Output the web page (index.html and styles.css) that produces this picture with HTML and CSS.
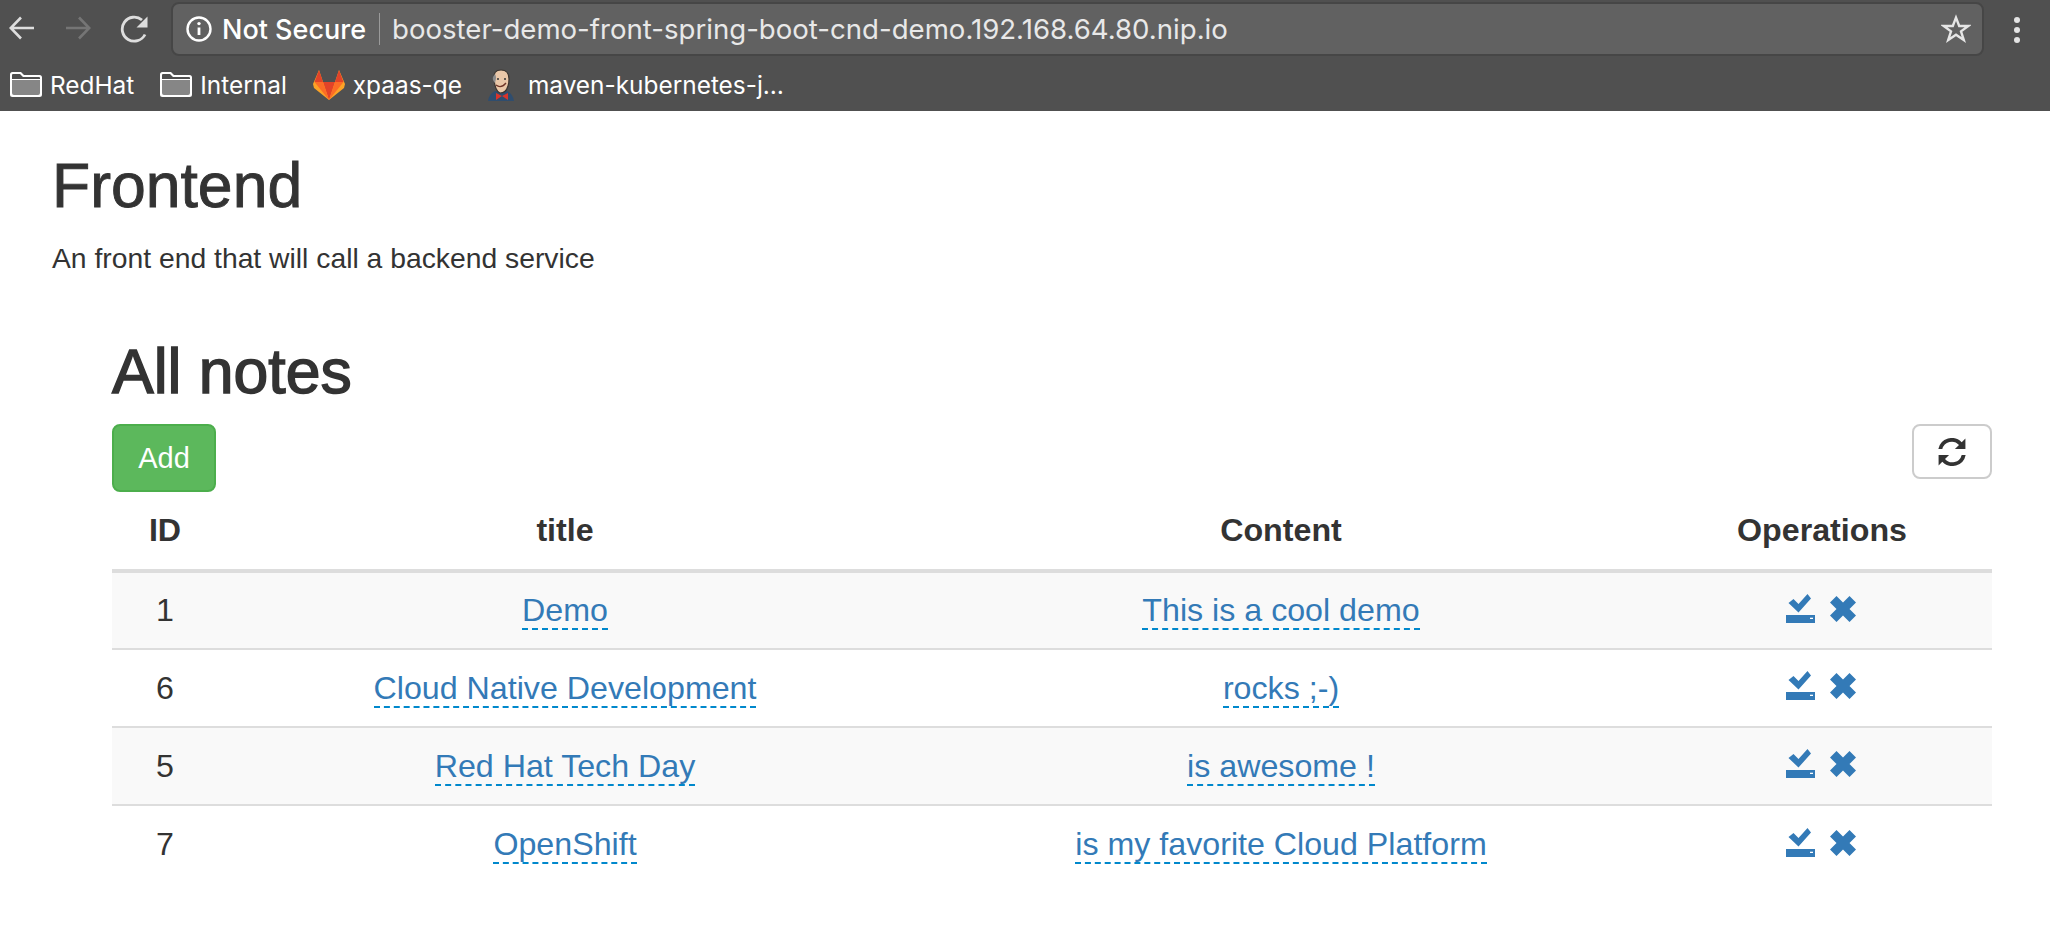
FILE: index.html
```html
<!DOCTYPE html>
<html lang="en">
<head>
  <meta charset="UTF-8" />
  <title>Frontend</title>
  <link rel="stylesheet" href="styles.css">
</head>
<body>
  <header class="browser-bar">
    <div class="toolbar">
      <svg class="nav-icon" width="26" height="26" viewBox="0 0 26 26" fill="none" stroke="#dedede" stroke-width="2.6"><path d="M25 13H2M12 2.500 1.800 13 12 23.500"/></svg>
      <svg class="nav-icon nav-forward" width="26" height="26" viewBox="0 0 26 26" fill="none" stroke="#757575" stroke-width="2.6"><path d="M1 13h23M14 2.500 24.200 13 14 23.500"/></svg>
      <svg class="nav-icon nav-reload" width="28" height="28" viewBox="0 0 28 28" fill="none"><path d="M25 19.500A12 12 0 1 1 22 5" stroke="#dedede" stroke-width="2.8"/><path d="M27.500 1.500V12.500H16.500Z" fill="#dedede"/></svg>
      <div class="address">
        <svg width="26" height="26" viewBox="0 0 26 26" fill="none"><circle cx="13" cy="13" r="11.500" stroke="#fff" stroke-width="2.4"/><path d="M13 11.500v7.500" stroke="#fff" stroke-width="2.8"/><circle cx="13" cy="7.600" r="1.700" fill="#fff"/></svg>
        <span class="secure">Not Secure</span>
        <span class="address-sep"></span>
        <span class="url">booster-demo-front-spring-boot-cnd-demo.192.168.64.80.nip.io</span>
        <svg class="star" width="30" height="30" viewBox="0 0 30 30" fill="none"><path d="M15 3.600 18.200 12H27.200L20 17.400 22.800 26 15 20.800 7.200 26 10 17.400 2.800 12H11.800Z" stroke="#e6e6e6" stroke-width="2.4"/></svg>
      </div>
      <div class="menu-dots"><i></i><i></i><i></i></div>
    </div>
    <nav class="bookmarks">
      <a class="bookmark">
        <svg width="32" height="26" viewBox="0 0 32 26"><path d="M0 2.500Q0 0 2.500 0H11L14 3H29.500Q32 3 32 5.500V22.500Q32 25 29.500 25H2.500Q0 25 0 22.500Z" fill="#fff"/><path d="M2 8H30V21Q30 23 28 23H4Q2 23 2 21Z" fill="#868686"/><path d="M2 3Q2 2 3 2H10L13 5H29Q30 5 30 6V7H2Z" fill="#4f4f4f"/></svg>
        RedHat
      </a>
      <a class="bookmark">
        <svg width="32" height="26" viewBox="0 0 32 26"><path d="M0 2.500Q0 0 2.500 0H11L14 3H29.500Q32 3 32 5.500V22.500Q32 25 29.500 25H2.500Q0 25 0 22.500Z" fill="#fff"/><path d="M2 8H30V21Q30 23 28 23H4Q2 23 2 21Z" fill="#868686"/><path d="M2 3Q2 2 3 2H10L13 5H29Q30 5 30 6V7H2Z" fill="#4f4f4f"/></svg>
        Internal
      </a>
      <a class="bookmark">
        <svg width="32" height="30" viewBox="0 0 32 30"><path d="M16 30 1 18 0 14 6 0 10 12H22L26 0 32 14 31 18Z" fill="#fca326"/><path d="M16 30 10 12H22Z" fill="#e24329"/><path d="M16 30 10 12H1.500Z" fill="#fc6d26"/><path d="M16 30 22 12H30.500Z" fill="#fc6d26"/><path d="M6 0 10 12H1.500Z" fill="#e24329"/><path d="M26 0 22 12H30.500Z" fill="#e24329"/></svg>
        xpaas-qe
      </a>
      <a class="bookmark bookmark-avatar">
        <svg width="26" height="32" viewBox="0 0 26 32"><path d="M0 32Q1 25 7 22L19 22Q25 25 26 32Z" fill="#2f4d6e"/><path d="M6 10Q5 1 13 1 21 1 21 10 21 14 20 17 18 24 12 24 7 22 6 10Z" fill="#eac7a8" stroke="#3c3530" stroke-width="1.200"/><path d="M6 13Q3 9 7 5 9 8 7 14Z" fill="#8d8d8d"/><path d="M8 16Q13 20 18 14" stroke="#6e3427" stroke-width="1.200" fill="none"/><circle cx="10" cy="10" r="1" fill="#333"/><circle cx="17" cy="10" r="1" fill="#333"/><path d="M8 24 14 27 20 24V31L14 27 8 31Z" fill="#d9342b"/></svg>
        maven-kubernetes-j…
      </a>
    </nav>
  </header>

  <main class="page">
    <h1 class="page-title">Frontend</h1>
    <p class="page-lead">An front end that will call a backend service</p>

    <section class="notes">
      <h2 class="notes-title">All notes</h2>
      <div class="notes-actions">
        <button class="btn-add">Add</button>
        <button class="btn-refresh">
          <svg width="28" height="28" viewBox="3 3 24 24"><path d="M26.500 3.500V12.500H17.500L21 9A8.300 8.300 0 0 0 6.700 12.500H3.300A11.700 11.700 0 0 1 23.300 6.700Z" fill="#333"/><path d="M3.500 26.500V17.500H12.500L9 21A8.300 8.300 0 0 0 23.300 17.500H26.700A11.700 11.700 0 0 1 6.700 23.300Z" fill="#333"/></svg>
        </button>
      </div>
      <table class="notes-table">
        <colgroup>
          <col class="col-id"><col class="col-title"><col class="col-content"><col class="col-ops">
        </colgroup>
        <thead>
          <tr><th>ID</th><th>title</th><th>Content</th><th class="ops-head">Operations</th></tr>
        </thead>
        <tbody>
          <tr>
            <td>1</td><td><a class="editable">Demo</a></td><td><a class="editable">This is a cool demo</a></td>
            <td class="ops">
              <svg width="30" height="30" viewBox="0 0 30 30"><path d="M2.500 9 7.500 5 12.500 10 21.500 0 25 4.500 12.500 18.500Z" fill="#337ab7"/><path d="M0 21H29V29H0Z" fill="#337ab7"/><path d="M24 23.700H27V25H24Z" fill="#fff"/></svg>
              <svg class="op-remove" width="28" height="28" viewBox="0 0 28 28"><path d="M7.500 1 14 7.500 20.500 1 27 7.500 20.500 14 27 20.500 20.500 27 14 20.500 7.500 27 1 20.500 7.500 14 1 7.500Z" fill="#337ab7"/></svg>
            </td>
          </tr>
          <tr>
            <td>6</td><td><a class="editable">Cloud Native Development</a></td><td><a class="editable">rocks ;-)</a></td>
            <td class="ops">
              <svg width="30" height="30" viewBox="0 0 30 30"><path d="M2.500 9 7.500 5 12.500 10 21.500 0 25 4.500 12.500 18.500Z" fill="#337ab7"/><path d="M0 21H29V29H0Z" fill="#337ab7"/><path d="M24 23.700H27V25H24Z" fill="#fff"/></svg>
              <svg class="op-remove" width="28" height="28" viewBox="0 0 28 28"><path d="M7.500 1 14 7.500 20.500 1 27 7.500 20.500 14 27 20.500 20.500 27 14 20.500 7.500 27 1 20.500 7.500 14 1 7.500Z" fill="#337ab7"/></svg>
            </td>
          </tr>
          <tr>
            <td>5</td><td><a class="editable">Red Hat Tech Day</a></td><td><a class="editable">is awesome !</a></td>
            <td class="ops">
              <svg width="30" height="30" viewBox="0 0 30 30"><path d="M2.500 9 7.500 5 12.500 10 21.500 0 25 4.500 12.500 18.500Z" fill="#337ab7"/><path d="M0 21H29V29H0Z" fill="#337ab7"/><path d="M24 23.700H27V25H24Z" fill="#fff"/></svg>
              <svg class="op-remove" width="28" height="28" viewBox="0 0 28 28"><path d="M7.500 1 14 7.500 20.500 1 27 7.500 20.500 14 27 20.500 20.500 27 14 20.500 7.500 27 1 20.500 7.500 14 1 7.500Z" fill="#337ab7"/></svg>
            </td>
          </tr>
          <tr>
            <td>7</td><td><a class="editable">OpenShift</a></td><td><a class="editable">is my favorite Cloud Platform</a></td>
            <td class="ops">
              <svg width="30" height="30" viewBox="0 0 30 30"><path d="M2.500 9 7.500 5 12.500 10 21.500 0 25 4.500 12.500 18.500Z" fill="#337ab7"/><path d="M0 21H29V29H0Z" fill="#337ab7"/><path d="M24 23.700H27V25H24Z" fill="#fff"/></svg>
              <svg class="op-remove" width="28" height="28" viewBox="0 0 28 28"><path d="M7.500 1 14 7.500 20.500 1 27 7.500 20.500 14 27 20.500 20.500 27 14 20.500 7.500 27 1 20.500 7.500 14 1 7.500Z" fill="#337ab7"/></svg>
            </td>
          </tr>
        </tbody>
      </table>
    </section>
  </main>
</body>
</html>
```

FILE: styles.css
```css
* {
  box-sizing: border-box;
}

html, body {
  height: 100%;
}

body {
  margin: 0;
  background-color: #fff;
  color: #333;
  font-family: "Liberation Sans", Arial, sans-serif;
  overflow: hidden;
}

/* Browser chrome */
.browser-bar {
  height: 111px;
  background-color: #505050;
  color: #fff;
  font-family: "Inter", "Liberation Sans", sans-serif;
}

.toolbar {
  height: 58px;
  padding: 2px 0 0 9px;
  display: flex;
  align-items: flex-start;
}

.nav-icon {
  margin-top: 13px;
  flex-shrink: 0;
}

.nav-forward {
  margin-left: 30px;
}

.nav-reload {
  margin-left: 29px;
}

.address {
  margin-left: 23px;
  width: 1813px;
  height: 54px;
  padding: 0 11px 0 13px;
  background-color: #616161;
  border: 2px solid #464646;
  border-radius: 8px;
  display: flex;
  align-items: center;
}

.secure {
  margin-left: 10px;
  font-size: 27px;
  font-weight: 500;
}

.address-sep {
  margin: 0 12px 0 13px;
  width: 1px;
  height: 32px;
  background-color: #9a9a9a;
}

.url {
  font-size: 27.6px;
  color: #e8e8e8;
}

.star {
  margin-left: auto;
}

.menu-dots {
  margin: 15px 0 0 30px;
  display: flex;
  flex-direction: column;
  gap: 4px;
}

.menu-dots i {
  width: 6px;
  height: 6px;
  border-radius: 50%;
  background-color: #e4e4e4;
}

.bookmarks {
  height: 53px;
  padding-left: 10px;
  display: flex;
  align-items: center;
  gap: 26px;
}

.bookmark {
  display: flex;
  align-items: center;
  gap: 8px;
  font-size: 24.4px;
}

.bookmark-avatar {
  gap: 14px;
}

/* Page */
.page {
  padding: 41px 58px 0 52px;
}

.page-title {
  margin: 0;
  font-size: 62.5px;
  font-weight: 500;
  line-height: 66px;
  -webkit-text-stroke: 0.9px #333;
}

.page-lead {
  margin: 22px 0 0;
  font-size: 28.3px;
  line-height: 36px;
  color: #333;
}

.notes {
  margin: 62px 0 0 60px;
}

.notes-title {
  margin: 0;
  font-size: 62.5px;
  font-weight: 500;
  line-height: 66px;
  -webkit-text-stroke: 1.5px #333;
}

.notes-actions {
  margin-top: 20px;
  display: flex;
  justify-content: space-between;
  align-items: flex-start;
}

.btn-add {
  width: 104px;
  height: 68px;
  background-color: #5cb85c;
  border: 2px solid #4cae4c;
  border-radius: 8px;
  color: #fff;
  font-family: inherit;
  font-size: 29px;
}

.btn-refresh {
  width: 80px;
  height: 55px;
  background-color: #fff;
  border: 2px solid #ccc;
  border-radius: 8px;
  display: flex;
  align-items: center;
  justify-content: center;
}

.notes-table {
  width: 100%;
  border-collapse: collapse;
  table-layout: fixed;
  font-size: 32.2px;
}

.col-id { width: 106px; }
.col-title { width: 694px; }
.col-content { width: 738px; }
.col-ops { width: 342px; }

.notes-table th {
  height: 79px;
  border-bottom: 4px solid #ddd;
  text-align: center;
  font-weight: 700;
}

.notes-table .ops-head {
  padding-left: 3px;
}

.notes-table td {
  height: 78px;
  border-bottom: 2px solid #ddd;
  text-align: center;
}

.notes-table tbody tr:nth-child(odd) {
  background-color: #f9f9f9;
}

.notes-table tbody tr:last-child td {
  border-bottom: none;
}

.editable {
  color: #337ab7;
  border-bottom: 2px dashed #08c;
}

.notes-table .ops {
  padding-left: 2px;
}

.ops svg {
  vertical-align: middle;
  margin-bottom: 6px;
}

.ops .op-remove {
  margin-left: 4px;
}
```
